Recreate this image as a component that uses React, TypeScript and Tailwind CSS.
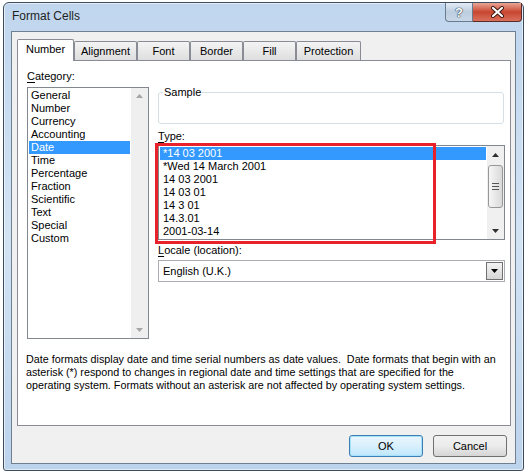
const CATEGORIES = [
  "General",
  "Number",
  "Currency",
  "Accounting",
  "Date",
  "Time",
  "Percentage",
  "Fraction",
  "Scientific",
  "Text",
  "Special",
  "Custom",
];

const TYPES = [
  "*14 03 2001",
  "*Wed 14 March 2001",
  "14 03 2001",
  "14 03 01",
  "14 3 01",
  "14.3.01",
  "2001-03-14",
];

const TABS = [
  { label: "Alignment", width: "w-[63px]" },
  { label: "Font", width: "w-[53px]" },
  { label: "Border", width: "w-[53px]" },
  { label: "Fill", width: "w-[53px]" },
  { label: "Protection", width: "w-[65px]" },
];

function Arrow({ up, color }: { up?: boolean; color: string }) {
  return (
    <svg width="7" height="4" viewBox="0 0 7 4">
      <path d={up ? "M0 4 L3.5 0 L7 4 Z" : "M0 0 L3.5 4 L7 0 Z"} fill={color} />
    </svg>
  );
}

function Underlined({ first, rest }: { first: string; rest: string }) {
  return (
    <span>
      <span className="underline underline-offset-[2px]">{first}</span>
      {rest}
    </span>
  );
}

export default function App() {
  return (
    <div className="h-[476px] w-[529px] overflow-hidden bg-white pl-[3px] pt-[2px] font-['Liberation_Sans',Arial,sans-serif] text-[11px] text-black">
      <div className="flex h-[469px] w-[521px] flex-col rounded-t-[6px] rounded-b-[3px] border border-[#3e4d5e] bg-linear-to-b from-[#c0d6ee] via-[#d2e3f4] to-[#bcd3ec] shadow-[inset_0_0_0_1px_rgba(255,255,255,0.55)]">
        {/* title bar */}
        <div className="flex h-[28px] items-start">
          <span className="mt-[6px] ml-[8px] text-[12px] leading-[15px] text-[#1e1e1e]">
            Format Cells
          </span>
          <div className="mr-[1px] ml-auto flex">
            <div className="flex h-[19px] w-[28px] items-center justify-center rounded-bl-[4px] border border-t-0 border-[#6a7b8e] bg-linear-to-b from-[#e3ecf6] via-[#bccddf] to-[#c9d8e8]">
              <span className="text-[13px] leading-none font-bold text-white [text-shadow:0_0_1px_#2b3a4c,0_0_1px_#2b3a4c,0_0_1px_#2b3a4c]">
                ?
              </span>
            </div>
            <div className="flex h-[19px] w-[49px] items-center justify-center rounded-br-[4px] border border-t-0 border-l-0 border-[#5a2a28] bg-linear-to-b from-[#e9a596] via-[#c8452f] to-[#d9705c]">
              <svg width="15" height="12" viewBox="0 0 15 12">
                <path d="M3 2 L12 10 M12 2 L3 10" stroke="#3a1410" strokeWidth="4" strokeLinecap="round" />
                <path d="M3 2 L12 10 M12 2 L3 10" stroke="#ffffff" strokeWidth="2.2" strokeLinecap="round" />
              </svg>
            </div>
          </div>
        </div>

        {/* client area */}
        <div className="mx-[7px] flex h-[433px] w-[505px] flex-col border border-[#6f8093] bg-[#f0f0f0] pt-[7px] pl-[5px]">
          {/* tabs */}
          <div className="relative z-10 -mb-px flex h-[22px] items-end">
            <div className="flex h-[22px] w-[57px] items-center justify-center rounded-t-[2px] border border-b-0 border-[#898c95] bg-white pb-[2px]">
              Number
            </div>
            {TABS.map((tab) => (
              <div
                key={tab.label}
                className={`${tab.width} mb-px flex h-[19px] items-center justify-center rounded-t-[2px] border border-b-0 border-[#898c95] bg-linear-to-b from-[#f4f4f4] to-[#dedede]`}
              >
                {tab.label}
              </div>
            ))}
          </div>

          {/* tab panel */}
          <div className="flex h-[366px] w-[494px] flex-col border border-[#898c95] bg-white">
            <div className="flex pt-[8px] pl-[9px]">
              {/* category */}
              <div className="flex w-[122px] flex-col">
                <div className="h-[15px] leading-[15px]">
                  <Underlined first="C" rest="ategory:" />
                </div>
                <div className="mt-[3px] flex h-[252px] border border-[#828790] bg-white">
                  <div className="flex-1 pt-px">
                    {CATEGORIES.map((c) => (
                      <div
                        key={c}
                        className={`mx-px h-[13px] pl-[2px] leading-[13px] ${
                          c === "Date" ? "bg-[#3399ff] text-white" : ""
                        }`}
                      >
                        {c}
                      </div>
                    ))}
                  </div>
                  <div className="flex w-[17px] flex-col justify-between bg-[#efefef] py-[6px] pl-[5px]">
                    <Arrow up color="#a6a6a6" />
                    <Arrow color="#a6a6a6" />
                  </div>
                </div>
              </div>

              {/* type */}
              <div className="ml-[9px] flex w-[347px] flex-col">
                <div className="relative mt-[23px] h-[32px] w-[346px] rounded-[3px] border border-[#d5dfe5]">
                  <span className="absolute -top-[8px] left-[4px] bg-white px-px leading-[15px]">
                    Sample
                  </span>
                </div>
                <div className="mt-[5px] h-[15px] leading-[15px]">
                  <Underlined first="T" rest="ype:" />
                </div>
                <div className="relative mt-px flex h-[95px] border border-[#828790] bg-white">
                  <div className="flex-1 pt-px">
                    {TYPES.map((t, i) => (
                      <div
                        key={t}
                        className={`mx-px h-[13px] pl-[3px] leading-[13px] ${
                          i === 0 ? "bg-[#3399ff] text-white" : ""
                        }`}
                      >
                        {t}
                      </div>
                    ))}
                  </div>
                  <div className="flex w-[17px] flex-col items-center bg-[#f0f0f0]">
                    <div className="flex h-[17px] items-center">
                      <Arrow up color="#303030" />
                    </div>
                    <div className="mt-[2px] flex h-[43px] w-[15px] flex-col items-center justify-center gap-[2px] rounded-[3px] border border-[#979797] bg-linear-to-r from-[#f6f6f6] to-[#d9d9d9]">
                      <div className="h-px w-[7px] bg-[#555]" />
                      <div className="h-px w-[7px] bg-[#555]" />
                      <div className="h-px w-[7px] bg-[#555]" />
                    </div>
                    <div className="mt-auto flex h-[17px] items-center">
                      <Arrow color="#303030" />
                    </div>
                  </div>
                  <div className="absolute -top-[3px] -left-[4px] h-[101px] w-[281px] border-[3px] border-[#e8212b]" />
                </div>
                <div className="mt-[3px] h-[15px] leading-[15px]">
                  <Underlined first="L" rest="ocale (location):" />
                </div>
                <div className="mt-[2px] flex h-[22px] items-center border border-[#abadb3] bg-white p-px">
                  <span className="flex-1 pl-[3px]">English (U.K.)</span>
                  <div className="flex h-full w-[17px] items-center justify-center border border-[#707070] bg-linear-to-b from-[#f3f3f3] to-[#d6d6d6]">
                    <Arrow color="#000" />
                  </div>
                </div>
              </div>
            </div>

            {/* description */}
            <div className="mt-[14px] pl-[8px] text-[10.75px] leading-[13px]">
              <div>
                Date formats display date and time serial numbers as date values.&nbsp; Date formats that begin with an
              </div>
              <div>
                asterisk (*) respond to changes in regional date and time settings that are specified for the
              </div>
              <div>
                operating system. Formats without an asterisk are not affected by operating system settings.
              </div>
            </div>
          </div>

          {/* buttons */}
          <div className="mt-[9px] flex w-[490px] justify-end gap-[10px]">
            <button className="h-[22px] w-[74px] rounded-[3px] border border-[#3c7fb1] bg-linear-to-b from-[#eaf6fd] via-[#d9f0fc] to-[#bee6fd] shadow-[inset_0_0_0_1px_#a7e0fb]">
              OK
            </button>
            <button className="h-[22px] w-[74px] rounded-[3px] border border-[#707070] bg-linear-to-b from-[#f2f2f2] via-[#ebebeb] to-[#d5d5d5]">
              Cancel
            </button>
          </div>
        </div>
      </div>
    </div>
  );
}
